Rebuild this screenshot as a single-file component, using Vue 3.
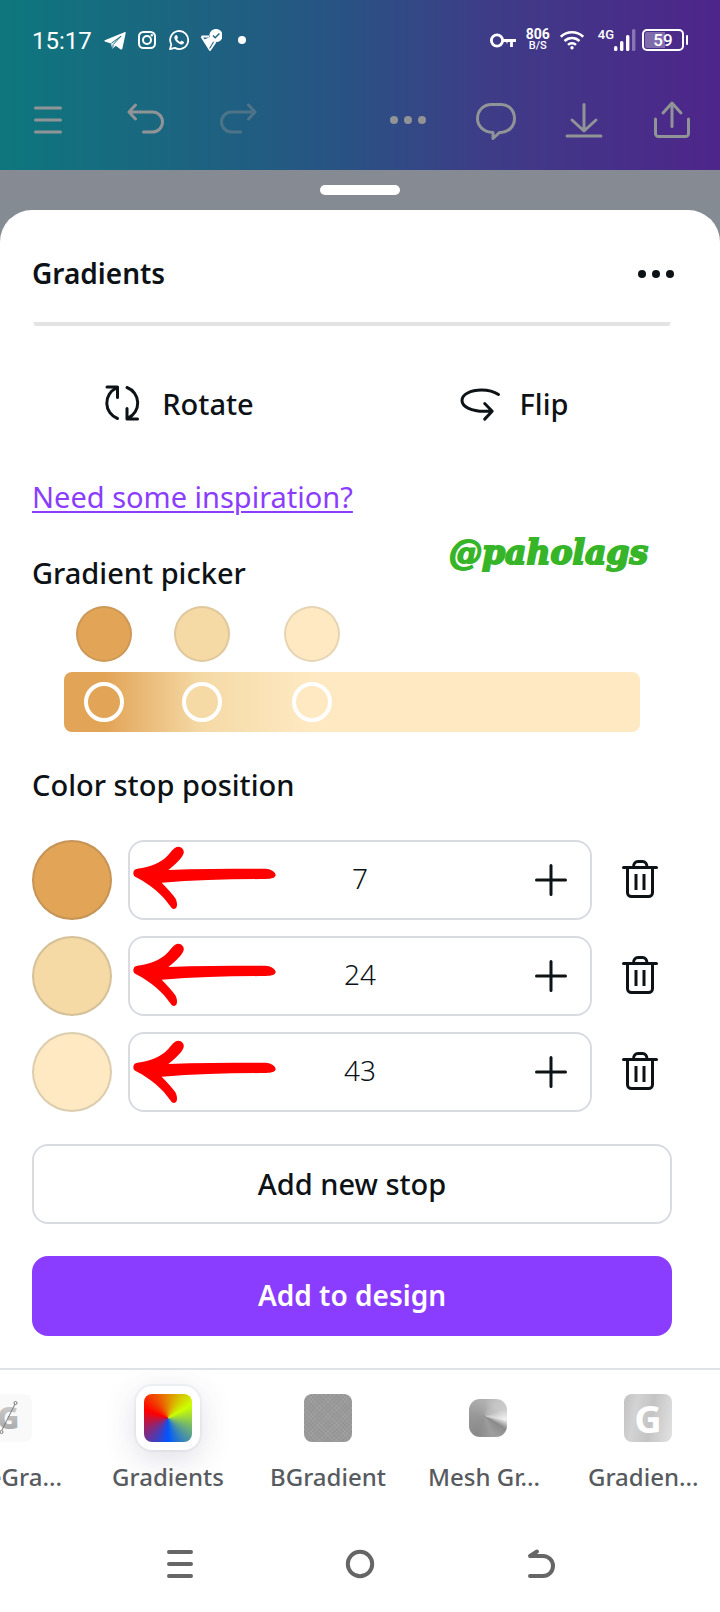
<script setup>
import { ref, computed } from 'vue'

const stops = ref([
  { color: '#e2a457', position: 7 },
  { color: '#f5daa6', position: 24 },
  { color: '#fee9c2', position: 43 },
])

const gradient = computed(
  () => `linear-gradient(90deg, ${stops.value.map((s) => `${s.color} ${s.position}%`).join(', ')})`
)

const tabs = [
  { label: 'eGra...', kind: 'type' },
  { label: 'Gradients', kind: 'wheel' },
  { label: 'BGradient', kind: 'noise' },
  { label: 'Mesh Gr...', kind: 'mesh' },
  { label: 'Gradien...', kind: 'letter' },
]

function increase(stop) {
  stop.position = Math.min(100, Number(stop.position) + 1)
}
function remove(index) {
  stops.value.splice(index, 1)
}
</script>

<template>
  <div class="screen">
    <header class="top">
      <div class="status">
        <div class="status-left">
          <span class="clock">15:17</span>
          <svg class="s-icon" viewBox="0 0 22 22"><path d="M.8 11.2 20.4 3.2c.9-.3 1.5.1 1.2 1.2l-3.2 15.2c-.2 1-.9 1.2-1.7.8l-4.9-3.7-2.5 2.4c-.5.5-1.2.3-1.3-.4l-1-4.2-5.5-1.8c-1.2-.4-1.3-1.1-.7-1.5z" fill="#fff"/><path d="M7.3 14.3 17 7.2l-7.8 8.3-.5 3.3" fill="none" stroke="#1a6a80" stroke-width="1"/></svg>
          <svg class="s-icon" viewBox="0 0 22 22" fill="none" stroke="#fff" stroke-width="2"><rect x="3" y="3" width="16" height="16" rx="4.5"/><circle cx="11" cy="11" r="4"/><circle cx="15.8" cy="6.2" r="1.2" fill="#fff" stroke="none"/></svg>
          <svg class="s-icon" viewBox="0 0 22 22"><path d="M2 20.2 3.3 15.4A9 9 0 1 1 6.8 18.9Z" fill="none" stroke="#fff" stroke-width="1.8" stroke-linejoin="round"/><path d="M7.6 6.2c.6-.4 1.2-.3 1.5.4l.8 1.8c.1.6-.5 1.1-.8 1.5.7 1.4 1.7 2.3 3.1 3 .5-.5.9-1.3 1.5-1.1l1.9.9c.7.4.4 1.2 0 1.8-.8 1-2 1.2-3.2.8-2.9-1-4.9-3-5.9-5.700-.4-1.300-.1-2.600 1.100-3.400z" fill="#fff"/></svg>
          <svg class="s-icon" viewBox="0 0 22 22"><path d="M1.500 7.500h7.500M1.500 7.500l8.500 13.500L15.500 13" fill="none" stroke="#fff" stroke-width="2" stroke-linejoin="round"/><path d="M3 11l7-3 5 4-6 8z" fill="#fff"/><path d="M9.500 19.500 14 12" stroke="#1f6280" stroke-width="1"/><circle cx="16" cy="6.500" r="6.600" fill="#fff"/><path d="m13 6.500 2.200 2.200L19.400 4.500" fill="none" stroke="#1f6280" stroke-width="1.500"/></svg>
          <span class="pip"></span>
        </div>
        <div class="status-right">
          <svg width="26" height="22" viewBox="0 0 26 22" fill="none" stroke="#fff"><circle cx="7" cy="11.500" r="5.600" stroke-width="2.800"/><path d="M12.500 11.500H26M21.500 11.500V18" stroke-width="2.800"/><path d="M17 12v2.500" stroke-width="1"/></svg>
          <div class="speed"><b>806</b><span>B/S</span></div>
          <svg width="24" height="22" viewBox="0 0 24 22" fill="none" stroke="#fff" stroke-width="2.500"><path d="M.8 7.800a16 16 0 0 1 22.400 0M4.500 12a10.600 10.600 0 0 1 15 0M8 15.800a5.700 5.700 0 0 1 8 0"/><circle cx="12" cy="18.800" r="1.700" fill="#fff" stroke="none"/></svg>
          <div class="signal">
            <span>4G</span>
            <svg width="22" height="22" viewBox="0 0 22 22"><g fill="#fff"><rect x="0" y="17" width="3.400" height="5" rx="1.500"/><rect x="6" y="12" width="3.400" height="10" rx="1.500"/><rect x="12" y="6" width="3.400" height="16" rx="1.500"/><rect x="18" y="0" width="3.400" height="22" rx="1.500" opacity=".35"/></g></svg>
          </div>
          <div class="battery"><span>59</span></div>
        </div>
      </div>

      <nav class="toolbar" aria-label="Editor">
        <div class="group left">
          <button aria-label="Menu"><svg viewBox="0 0 48 48"><path d="M11.500 12h25M11.500 24h25M11.500 36h25"/></svg></button>
          <button aria-label="Undo"><svg viewBox="0 0 48 48"><path d="M15.500 9 9 16l6.500 7M9 16h23.500a10 10 0 0 1 0 20h-9"/></svg></button>
          <button aria-label="Redo" class="dim"><svg viewBox="0 0 48 48"><path d="M32.500 9 39 16l-6.500 7M39 16H15.500a10 10 0 0 0 0 20h9"/></svg></button>
        </div>
        <div class="group right">
          <button aria-label="More"><svg viewBox="0 0 48 48"><g class="dots"><circle cx="10" cy="24" r="4"/><circle cx="24" cy="24" r="4"/><circle cx="38" cy="24" r="4"/></g></svg></button>
          <button aria-label="Comment"><svg viewBox="0 0 48 48"><path d="M19.500 8.500h9.500c8 0 13.500 6 13.500 14 0 7.500-5.500 13.500-13.500 14h-1.500L21 42.500v-6C12 36 5.500 30.500 5.500 22.500c0-8 6-14 14-14z"/></svg></button>
          <button aria-label="Download"><svg viewBox="0 0 48 48"><path d="M24 8.500V34M12 24l12 11 12-11M7 40h34"/></svg></button>
          <button aria-label="Share"><svg viewBox="0 0 48 48"><path d="M24 7.500v23M15 17l9-10 9 10M7.500 23v14.500a3 3 0 0 0 3 3h27a3 3 0 0 0 3-3V23"/></svg></button>
        </div>
      </nav>
    </header>

    <div class="grab"><span></span></div>

    <main class="sheet">
      <div class="content">
        <div class="title-row">
          <h1>Gradients</h1>
          <button class="more" aria-label="More options"><svg viewBox="0 0 48 48"><circle cx="10" cy="24" r="4"/><circle cx="24" cy="24" r="4"/><circle cx="38" cy="24" r="4"/></svg></button>
        </div>
        <hr />

        <div class="actions">
          <button><svg viewBox="0 0 48 48"><path d="M19.500 39.500A16.500 16.500 0 0 1 18.500 9M9 8h10.500v10.500"/><path d="M29 8.500A16.500 16.500 0 0 1 30 39M39.500 40H29V29.500"/></svg>Rotate</button>
          <button><svg viewBox="0 0 48 48"><path d="M42.500 15.500C38 12.500 32 11 25.500 11 14.500 11 6 15.500 6 21.500 6 28 16 32.300 28 32.300h8M28.700 24.500l7.500 7.800-7.500 7.800"/></svg>Flip</button>
        </div>

        <a class="link" href="#inspiration">Need some inspiration?</a>

        <section class="picker">
          <h2>Gradient picker</h2>
          <span class="handle-name">@paholags</span>
          <div class="track">
            <div class="swatches">
              <button v-for="s in stops" :key="s.color" class="swatch" :aria-label="`Color at ${s.position}%`" :style="{ left: s.position + '%', background: s.color }"></button>
            </div>
            <div class="bar" :style="{ background: gradient }">
              <button v-for="s in stops" :key="s.color" class="knob" :aria-label="`Stop at ${s.position}%`" :style="{ left: s.position + '%', background: s.color }"></button>
            </div>
          </div>
        </section>

        <section class="positions">
          <h2>Color stop position</h2>
          <div class="rows">
            <div v-for="(s, i) in stops" :key="s.color" class="row">
              <button class="color" :aria-label="`Color ${i + 1}`" :style="{ background: s.color }"></button>
              <div class="field">
                <input v-model="s.position" type="text" inputmode="numeric" :aria-label="`Position of stop ${i + 1}`" />
                <button aria-label="Increase" @click="increase(s)"><svg viewBox="0 0 48 48"><path d="M24 9.500v29M9.500 24h29"/></svg></button>
              </div>
              <button class="trash" aria-label="Delete stop" @click="remove(i)"><svg viewBox="0 0 48 48"><path d="M7.500 11.500h33M17.500 11c0-3.500 2-5.500 4.500-5.500h4.500c2.500 0 4.500 2 4.500 5.500M11.500 12v24.500a4 4 0 0 0 4 4h17a4 4 0 0 0 4-4V12"/><path class="butt" d="M20 18v16M28 18v16"/></svg></button>
            </div>
            <svg class="arrows" viewBox="0 0 441 774" aria-hidden="true">
              <defs>
                <path id="arrow" d="M4 84Q5 72 16 71C55 67 88 52 105 34 118 21 125 5 139 5 150 6 157 14 155 25 151 39 132 57 109 75 200 71 300 71 400 71 415 71 431 80 431 91 430 98 420 102 402 102 295 103 190 105 89 113 103 128 120 145 130 160 136 170 137 185 131 190 125 194 119 191 115 184 92 149 57 120 15 98 6 94 4 91 4 84Z"/>
              </defs>
              <use href="#arrow"/><use href="#arrow" y="291"/><use href="#arrow" y="582"/>
            </svg>
          </div>
        </section>

        <div class="buttons">
          <button class="outline">Add new stop</button>
          <button class="primary">Add to design</button>
        </div>
      </div>

      <nav class="tabs" aria-label="Apps">
        <button v-for="t in tabs" :key="t.label" class="tab" :class="t.kind">
          <span class="tile">
            <svg v-if="t.kind === 'type'" class="art" viewBox="0 0 48 48">
              <defs><linearGradient id="g1" x2="0" y2="1"><stop offset="0" stop-color="#d6d6d6"/><stop offset="1" stop-color="#a0a0a0"/></linearGradient></defs>
              <rect width="48" height="48" rx="8" fill="#f9f9f9"/>
              <text x="13" y="35" font-family="Open Sans, sans-serif" font-weight="800" font-size="30" fill="url(#g1)">G</text>
              <path d="M18 36 31 10" stroke="#777" stroke-width="1"/><circle cx="31.500" cy="9" r="1.500" fill="none" stroke="#777"/><circle cx="17.500" cy="38" r="1.500" fill="none" stroke="#777"/>
            </svg>
            <span v-else-if="t.kind === 'letter'" class="art">G</span>
            <span v-else class="art"></span>
          </span>
          <span class="label">{{ t.label }}</span>
        </button>
      </nav>
    </main>

    <nav class="system" aria-label="System">
      <button aria-label="Recents"><svg viewBox="0 0 32 32"><path d="M5 4h22M5 16h22M5 28h22"/></svg></button>
      <button aria-label="Home"><svg viewBox="0 0 32 32"><circle cx="16" cy="16" r="12.200"/></svg></button>
      <button aria-label="Back"><svg viewBox="0 0 32 32"><path d="M6 28h13a10 10 0 0 0 0-20H6l7-4.500"/></svg></button>
    </nav>
  </div>
</template>

<style>
body { background: #fff; }
</style>

<style scoped>
* { box-sizing: border-box; }
button { border: 0; padding: 0; margin: 0; background: none; color: inherit; font: inherit; cursor: pointer; }
svg { display: block; flex: none; }
h1, h2 { margin: 0; line-height: 40px; }
h1 { font-size: 28px; font-weight: 600; padding-bottom: 2px; }
h2 { font-size: 29px; font-weight: 500; }

.screen {
  display: flex; flex-direction: column; min-height: 100vh; overflow: hidden;
  font-family: "Noto Sans", sans-serif; font-size: 29px; color: #0d1216;
  background: linear-gradient(#868a93 170px, #848c92 250px, #fff 250px);
}
.top { background: linear-gradient(90deg, #0d777d, #176b7f 16%, #205e81 34%, #2a5184 49%, #3e3c87 68%, #4e258a); color: #fff; }
.status { display: flex; justify-content: space-between; height: 80px; padding: 0 32px; font-family: Roboto, sans-serif; }
.status-left { display: flex; align-items: center; gap: 10px; }
.clock { font-size: 24px; margin-right: 2px; padding-top: 2px; }
.s-icon { width: 22px; height: 22px; }
.pip { width: 8px; height: 8px; margin-left: 6px; border-radius: 50%; background: #fff; }
.status-right { display: flex; align-items: center; gap: 10px; }
.speed { display: flex; flex-direction: column; align-items: center; font-size: 11px; line-height: 10px; font-weight: 500; padding-bottom: 2px; }
.speed b { font-size: 14px; line-height: 14px; font-weight: 700; }
.signal { display: flex; align-items: flex-start; margin-left: 4px; }
.signal span { font-size: 13px; line-height: 12px; font-weight: 500; }
.battery { position: relative; width: 42px; height: 22px; margin: 0 4px 0 -4px; border: 2px solid #fff; border-radius: 5px; font-size: 17px; line-height: 18px; font-weight: 500; text-align: center; background: linear-gradient(90deg, #ffffff4d 55%, transparent 55%) content-box; padding: 1px; }
.battery span { display: block; line-height: 16px; }
.battery::after { content: ""; position: absolute; right: -6px; top: 4px; width: 2px; height: 10px; background: #fff; border-radius: 1px; }

.toolbar { display: flex; justify-content: space-between; height: 90px; padding: 16px 24px 0; color: #919496; }
.group { display: flex; }
.left { gap: 48px; }
.right { gap: 40px; }
.group button { width: 48px; height: 48px; }
.group svg { width: 48px; height: 48px; fill: none; stroke: currentColor; stroke-width: 3; stroke-linecap: round; stroke-linejoin: round; }
.group .dots { fill: currentColor; stroke: none; }
.dim { opacity: .4; }

.grab { display: flex; justify-content: center; height: 40px; padding-top: 15px; }
.grab span { width: 80px; height: 10px; border-radius: 5px; background: #fff; }

.sheet { background: #fff; border-radius: 32px 32px 0 0; }
.content { padding: 16px 48px 32px 32px; }
.title-row { display: flex; align-items: center; justify-content: space-between; height: 96px; }
.more { width: 48px; height: 48px; margin-right: -8px; }
.more svg { width: 48px; height: 48px; fill: currentColor; }
hr { margin: 0 1px; border: 2px solid transparent; border-top: 4px solid #e3e3e3; border-bottom: 0; height: 4px; }

.actions { display: grid; grid-template-columns: 9fr 10fr; column-gap: 32px; margin-top: 45px; font-weight: 500; }
.actions button { display: flex; align-items: center; justify-content: center; gap: 16px; height: 64px; }
.actions svg { width: 48px; height: 48px; fill: none; stroke: currentColor; stroke-width: 3; stroke-linecap: round; stroke-linejoin: round; }

.link { display: block; width: fit-content; margin-top: 42px; line-height: 40px; font-size: 29px; font-weight: 400; color: #8b3dff; text-decoration: underline; text-decoration-thickness: 2px; text-underline-offset: 3px; }

.picker { position: relative; margin-top: 36px; }
.handle-name { position: absolute; right: 24px; top: -20px; font: italic bold 33px/40px "DejaVu Serif", serif; color: #36b528; -webkit-text-stroke: 2px #36b528; }
.track { padding: 0 32px; margin-top: 13px; }
.swatches { position: relative; height: 56px; }
.swatch { position: absolute; width: 56px; height: 56px; margin-left: -28px; border-radius: 50%; box-shadow: inset 0 0 0 2px #3947581f; }
.bar { position: relative; height: 60px; margin-top: 10px; border-radius: 8px; }
.knob { position: absolute; top: 10px; width: 40px; height: 40px; margin-left: -20px; border: 4px solid #fff; border-radius: 50%; }

.positions { margin-top: 33px; }
.rows { position: relative; display: grid; grid-template-columns: minmax(0, 1fr); gap: 16px; margin-top: 35px; }
.row { display: flex; gap: 16px; height: 80px; }
.color { flex: none; width: 80px; border-radius: 50%; box-shadow: inset 0 0 0 2px #3947582b; }
.field { display: flex; flex: 1; min-width: 0; padding-left: 78px; border: 2px solid #d8dbe0; border-radius: 16px; }
.field input { flex: 1; width: 0; min-width: 0; padding: 0 0 4px; border: 0; outline: 0; background: none; font: inherit; font-size: 28px; font-weight: 350; color: inherit; text-align: center; }
.field button { display: flex; align-items: center; justify-content: center; width: 78px; }
.field svg, .trash svg { width: 48px; height: 48px; fill: none; stroke: currentColor; stroke-width: 3; stroke-linecap: round; stroke-linejoin: round; }
.trash { display: flex; flex: none; align-items: center; justify-content: center; width: 64px; }
.trash .butt { stroke-linecap: butt; }
.arrows { position: absolute; left: 100px; top: 5px; width: 147px; height: 258px; fill: #f00; pointer-events: none; }

.buttons { display: grid; gap: 32px; margin-top: 32px; }
.buttons button { height: 80px; border-radius: 16px; padding-bottom: 2px; }
.outline { border: 2px solid #d8dbe0; font-weight: 500; }
.buttons .primary { background: #8b3dff; color: #fff; font-size: 28px; font-weight: 600; }

.tabs { display: flex; overflow: hidden; height: 148px; padding-top: 16px; border-top: 2px solid #dfe2e7; color: #575b5f; }
.tab { display: flex; flex: none; flex-direction: column; align-items: center; gap: 11px; width: 160px; height: 108px; font-size: 24px; line-height: 32px; font-weight: 500; }
.tile { display: flex; align-items: center; justify-content: center; width: 64px; height: 64px; border-radius: 16px; }
.art { display: block; width: 48px; height: 48px; border-radius: 8px; }
.type { align-items: flex-end; width: 88px; padding-right: 26px; }
.type .tile { width: 62px; padding-right: 30px; justify-content: flex-end; }
.type .label { display: flex; justify-content: flex-end; width: 62px; overflow: hidden; }
.mesh .label, .letter .label { width: 120px; text-align: left; }
.wheel .tile { background: #fff; box-shadow: 0 0 0 2px #40576d0d, 0 8px 32px #40446d2e; }
.wheel .art { background: conic-gradient(from 60deg, #cf0, #05f 120deg, #f00 230deg, #cf0); }
.noise .art { background: repeating-linear-gradient(45deg, #ffffff0a 0 1px, #00000005 1px 3px), repeating-linear-gradient(-45deg, #ffffff0a 0 1px, #00000005 1px 3px), #9b9b9b; }
.mesh .art { width: 38px; height: 38px; border-radius: 11px; background: radial-gradient(circle at 20% 90%, #7f7f7fb3, transparent 70%), conic-gradient(from 0deg at 42% 45%, #b0b0b0, #c4c4c4 40deg, #cacaca 70deg, #f2f2f2 100deg, #8c8c8c 122deg, #b0b0b0 160deg, #a0a0a0 200deg, #a3a3a3 270deg, #b0b0b0); }
.letter .art { background: linear-gradient(100deg, #c1c1c1, #d3d3d3 25%, #c4c4c4 55%, #e2e2e2); color: #fff; font-size: 38px; line-height: 48px; font-weight: 700; text-align: center; }

.system { display: flex; justify-content: center; align-items: center; gap: 148px; height: 96px; }
.system button, .system svg { width: 32px; height: 32px; }
.system svg { fill: none; stroke: #666; stroke-width: 4; stroke-linecap: round; stroke-linejoin: round; }
</style>
